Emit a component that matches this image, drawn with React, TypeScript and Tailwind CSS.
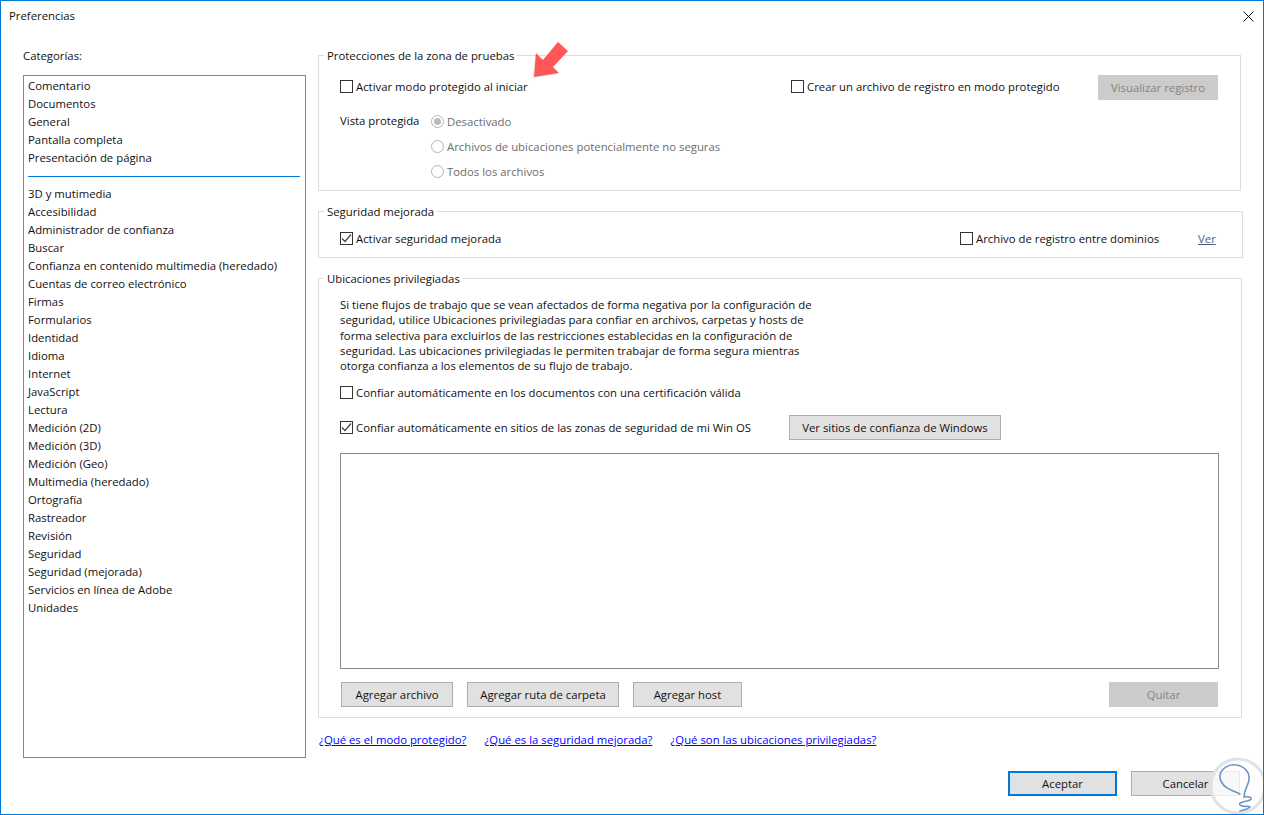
import React from 'react'

const topCategories = ['Comentario', 'Documentos', 'General', 'Pantalla completa', 'Presentación de página']
const otherCategories = [
  '3D y mutimedia', 'Accesibilidad', 'Administrador de confianza', 'Buscar',
  'Confianza en contenido multimedia (heredado)', 'Cuentas de correo electrónico', 'Firmas', 'Formularios',
  'Identidad', 'Idioma', 'Internet', 'JavaScript', 'Lectura', 'Medición (2D)', 'Medición (3D)', 'Medición (Geo)',
  'Multimedia (heredado)', 'Ortografía', 'Rastreador', 'Revisión', 'Seguridad', 'Seguridad (mejorada)',
  'Servicios en línea de Adobe', 'Unidades',
]

function Check({ label, checked = false, className = '' }: { label: string; checked?: boolean; className?: string }) {
  return (
    <label className={'flex items-center gap-[3px] ' + className}>
      <span className="w-[13px] h-[13px] border border-[#333333] bg-white flex items-center justify-center shrink-0">
        {checked && (
          <svg width="11" height="11" viewBox="0 0 11 11" fill="none" stroke="#444444" strokeWidth="1.2">
            <path d="M1 5.5l3 3 6-7" />
          </svg>
        )}
      </span>
      <span className="whitespace-nowrap">{label}</span>
    </label>
  )
}

function Radio({ label, selected = false }: { label: string; selected?: boolean }) {
  return (
    <div className="h-[25px] flex items-center gap-[3px] text-[#6d6d6d]">
      <span className="w-[13px] h-[13px] rounded-full border border-[#b5b5b5] flex items-center justify-center">
        {selected && <span className="w-[7px] h-[7px] rounded-full bg-[#bcbcbc]" />}
      </span>
      <span className="whitespace-nowrap">{label}</span>
    </div>
  )
}

function Button({ label, className = '' }: { label: string; className?: string }) {
  return (
    <button className={'h-[25px] bg-[#e1e1e1] border border-[#adadad] text-[#111111] whitespace-nowrap ' + className}>
      {label}
    </button>
  )
}

function DisabledButton({ label, className = '' }: { label: string; className?: string }) {
  return <button className={'h-[25px] bg-[#cccccc] text-[#838383] whitespace-nowrap ' + className}>{label}</button>
}

function Group({ title, className, children }: { title: string; className: string; children: React.ReactNode }) {
  return (
    <fieldset className={'border border-[#dcdcdc] ' + className}>
      <legend className="ml-[5px] px-[3px] h-[15px] leading-[16px]">{title}</legend>
      {children}
    </fieldset>
  )
}

function HelpLink({ label }: { label: string }) {
  return <a className="text-[#0000ff] underline whitespace-nowrap">{label}</a>
}

export default function App() {
  return (
    <div className="relative w-[1264px] h-[815px] overflow-hidden bg-white border border-[#0078d7] text-[11.35px] text-[#111111] font-['Open_Sans',sans-serif]">
      <div className="h-[30px] flex items-center justify-between pl-[8px] pr-[9px]">
        <span>Preferencias</span>
        <svg width="11" height="11" viewBox="0 0 11 11" stroke="#111111" strokeWidth="1" fill="none">
          <path d="M0.5 0.5l10 10M10.5 0.5l-10 10" />
        </svg>
      </div>

      <div className="flex pl-[22px] pt-[17px]">
        <div className="w-[283px] mr-[12px] shrink-0">
          <div className="h-[16px] leading-[16px] mb-[11px]">Categorías:</div>
          <div className="h-[683px] border border-[#828790] py-[1px] px-[4px]">
            {topCategories.map((c) => (
              <div key={c} className="h-[18px] leading-[18px] whitespace-nowrap">{c}</div>
            ))}
            <div className="h-[18px] flex items-center pr-[1px]">
              <div className="w-full h-[1px] bg-[#0078d7]" />
            </div>
            {otherCategories.map((c) => (
              <div key={c} className="h-[18px] leading-[18px] whitespace-nowrap">{c}</div>
            ))}
          </div>
        </div>

        <div className="w-[923px] shrink-0">
          <Group title="Protecciones de la zona de pruebas" className="h-[143px] mb-[13px]">
            <div className="pt-[12px] pl-[21px] pr-[22px]">
              <div className="flex items-center h-[25px]">
                <Check label="Activar modo protegido al iniciar" className="w-[451px] mb-[2px]" />
                <Check label="Crear un archivo de registro en modo protegido" className="w-[307px] mb-[2px]" />
                <DisabledButton label="Visualizar registro" className="w-[120px]" />
              </div>
              <div className="flex mt-[9px]">
                <div className="w-[91px] h-[25px] leading-[24px]">Vista protegida</div>
                <div>
                  <Radio label="Desactivado" selected />
                  <Radio label="Archivos de ubicaciones potencialmente no seguras" />
                  <Radio label="Todos los archivos" />
                </div>
              </div>
            </div>
          </Group>

          <Group title="Seguridad mejorada" className="h-[54px] mb-[13px]">
            <div className="pt-[8px] pl-[21px] pr-[26px] flex items-center h-[32px]">
              <Check label="Activar seguridad mejorada" checked className="w-[620px]" />
              <Check label="Archivo de registro entre dominios" className="w-[238px]" />
              <span className="text-[#4d6082] underline">Ver</span>
            </div>
          </Group>

          <Group title="Ubicaciones privilegiadas" className="h-[447px]">
            <div className="pt-[11px] pl-[21px] pr-[22px]">
              <p className="w-[480px] leading-[15.25px]">
                Si tiene flujos de trabajo que se vean afectados de forma negativa por la configuración de seguridad, utilice Ubicaciones privilegiadas para confiar en archivos, carpetas y hosts de forma selectiva para excluirlos de las restricciones establecidas en la configuración de seguridad. Las ubicaciones privilegiadas le permiten trabajar de forma segura mientras otorga confianza a los elementos de su flujo de trabajo.
              </p>
              <Check label="Confiar automáticamente en los documentos con una certificación válida" className="h-[20px] mt-[9px]" />
              <div className="flex items-center h-[25px] mt-[13px]">
                <Check label="Confiar automáticamente en sitios de las zonas de seguridad de mi Win OS" checked className="w-[449px]" />
                <Button label="Ver sitios de confianza de Windows" className="w-[212px]" />
              </div>
              <div className="h-[216px] w-[879px] border border-[#8a8a8a] mt-[13px]" />
              <div className="flex mt-[13px] pl-[1px]">
                <Button label="Agregar archivo" className="w-[112px] mr-[14px]" />
                <Button label="Agregar ruta de carpeta" className="w-[152px] mr-[14px]" />
                <Button label="Agregar host" className="w-[109px]" />
                <DisabledButton label="Quitar" className="w-[109px] ml-auto mr-[1px]" />
              </div>
            </div>
          </Group>

          <div className="flex gap-[18px] pl-[1px] mt-[14px] h-[16px] leading-[16px]">
            <HelpLink label="¿Qué es el modo protegido?" />
            <HelpLink label="¿Qué es la seguridad mejorada?" />
            <HelpLink label="¿Qué son las ubicaciones privilegiadas?" />
          </div>

          <div className="flex justify-end gap-[14px] mt-[23px] pr-[1px]">
            <button className="w-[109px] h-[25px] bg-[#e1e1e1] border-2 border-[#0078d7]">Aceptar</button>
            <Button label="Cancelar" className="w-[109px]" />
          </div>
        </div>
      </div>

      {/* flecha roja */}
      <svg className="absolute left-[529px] top-[39px]" width="42" height="40" viewBox="529 39 42 40">
        <path d="M532 77l2-24 7 7 15-18 10 9-15 16 6 6z" fill="#000000" fillOpacity="0.1" />
        <path d="M533 76l2-24 7 7 15-18 10 9-15 16 6 6z" fill="#ff5757" />
      </svg>

      {/* marca de agua */}
      <svg className="absolute left-[1207px] top-[756px]" width="56" height="58" viewBox="1208 757 56 58" fill="none">
        <circle cx="1238" cy="786" r="27" fill="#ffffff" fillOpacity="0.75" stroke="#dfe3e6" strokeWidth="3" />
        <path d="M1240 794C1232 790 1222 788 1220 778C1219 768 1230 764 1236 765C1244 766 1250 772 1249 780C1248 786 1244 790 1244 797C1250 796 1253 798 1250 800C1245 802 1238 802 1240 805C1243 808 1248 805 1250 807C1247 810 1243 810 1240 811" stroke="#6d95c6" strokeWidth="1.6" strokeLinecap="round" />
      </svg>
    </div>
  )
}
